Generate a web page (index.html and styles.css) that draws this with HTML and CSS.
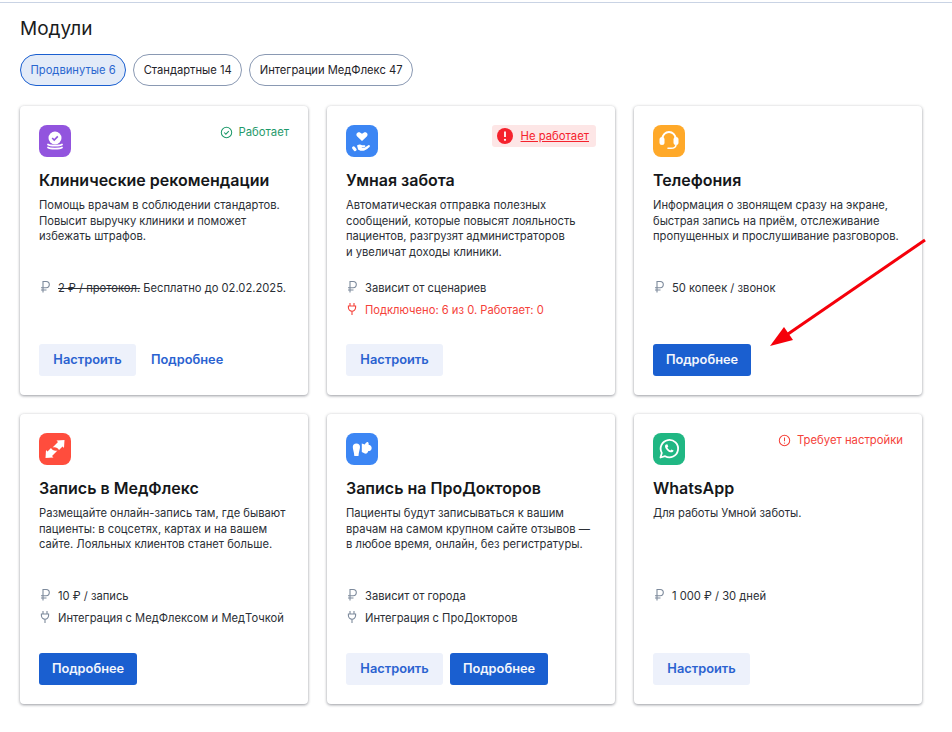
FILE: index.html
```html
<!DOCTYPE html>
<html lang="ru">
<head>
<meta charset="utf-8">
<title>Модули</title>
<link rel="stylesheet" href="styles.css">
</head>
<body>
<svg width="0" height="0" class="defs">
  <symbol id="rub" viewBox="0 0 12 14"><path d="M4 12.5V1.5h3.200a3 3 0 0 1 0 6.200H2M2 10h5.500" fill="none" stroke="currentColor" stroke-width="1.100"/></symbol>
  <symbol id="plug" viewBox="0 0 12 14"><path d="M4 1v3M8 1v3M2.400 4h7.200v1.600a3.600 3.600 0 0 1-7.200 0zM6 9.200V13" fill="none" stroke="currentColor" stroke-width="1.100"/></symbol>
</svg>
<main class="page">
  <h1 class="title">Модули</h1>
  <div class="tabs">
    <span class="tab tab-active">Продвинутые 6</span>
    <span class="tab">Стандартные 14</span>
    <span class="tab">Интеграции МедФлекс 47</span>
  </div>
  <section class="grid">
    <article class="card">
      <div class="top">
        <span class="icon purple"><svg viewBox="0 0 32 32" width="32" height="32"><circle cx="16" cy="13" r="6.500" fill="#fff"/><path d="M13.200 13l2 2 3.600-3.600" fill="none" stroke="#9254de" stroke-width="1.600"/><path d="M9 19.500c2 1.400 12 1.400 14 0M9 22.500c2 1.400 12 1.400 14 0" fill="none" stroke="#fff" stroke-width="1.800" stroke-linecap="round"/></svg></span>
        <span class="status ok"><svg viewBox="0 0 14 14" width="13" height="13"><circle cx="7" cy="7" r="5.600" fill="none" stroke="currentColor" stroke-width="1.100"/><path d="M4.500 7l1.800 1.800 3.200-3.300" fill="none" stroke="currentColor" stroke-width="1.100"/></svg>Работает</span>
      </div>
      <h2 class="name">Клинические рекомендации</h2>
      <p class="desc">Помощь врачам в соблюдении стандартов. Повысит выручку клиники и поможет избежать штрафов.</p>
      <ul class="meta">
        <li><svg class="mi"><use href="#rub"/></svg><span><s>2 ₽ / протокол.</s> Бесплатно до 02.02.2025.</span></li>
      </ul>
      <div class="actions"><a class="btn soft">Настроить</a><a class="btn link">Подробнее</a></div>
    </article>
    <article class="card">
      <div class="top">
        <span class="icon blue"><svg viewBox="0 0 32 32" width="32" height="32"><path d="M16 16l-4.800-4.400c-2.200-2.400.6-5.400 3.200-3.800l1.600 1 1.600-1c2.600-1.600 5.400 1.400 3.200 3.800z" fill="#fff"/><path d="M11 20.500c2-1.300 3.500-1.200 5-.3h2.500c1.200 0 1.200 1.800 0 1.800h-2.700v.4h3l3.500-2.200c1.300-.6 2.300.8 1.200 1.800-3.500 3.200-5 3.800-8 3.800-1.500 0-2.500-.8-3.400-1.300z" fill="#fff"/><rect x="6.800" y="21" width="3" height="5.500" rx="1.500" transform="rotate(-40 8.300 23.700)" fill="#fff"/></svg></span>
        <a class="status bad"><svg viewBox="0 0 16 16" width="16" height="16"><circle cx="8" cy="8" r="8" fill="#f5222d"/><path d="M8 3.500v5.500" stroke="#fff" stroke-width="1.800"/><circle cx="8" cy="11.800" r="1.100" fill="#fff"/></svg><u>Не работает</u></a>
      </div>
      <h2 class="name">Умная забота</h2>
      <p class="desc">Автоматическая отправка полезных сообщений, которые повысят лояльность пациентов, разгрузят администраторов и&nbsp;увеличат доходы клиники.</p>
      <ul class="meta">
        <li><svg class="mi"><use href="#rub"/></svg><span>Зависит от сценариев</span></li>
        <li class="alert"><svg class="mi"><use href="#plug"/></svg><span>Подключено: 6 из 0. Работает: 0</span></li>
      </ul>
      <div class="actions"><a class="btn soft">Настроить</a></div>
    </article>
    <article class="card">
      <div class="top">
        <span class="icon orange"><svg viewBox="0 0 32 32" width="32" height="32"><path d="M9.500 14v-.5a6.500 6.500 0 0 1 13 0v.5" fill="none" stroke="#fff" stroke-width="2"/><rect x="6.500" y="12" width="5" height="8" rx="2.500" fill="#fff"/><rect x="20.500" y="12" width="5" height="8" rx="2.500" fill="#fff"/><path d="M23 20c-.3 2.300-2 3.300-5 3.300h-3" fill="none" stroke="#fff" stroke-width="1.600" stroke-linecap="round"/></svg></span>
      </div>
      <h2 class="name">Телефония</h2>
      <p class="desc">Информация о звонящем сразу на экране, быстрая запись на приём, отслеживание пропущенных и прослушивание разговоров.</p>
      <ul class="meta">
        <li><svg class="mi"><use href="#rub"/></svg><span>50 копеек / звонок</span></li>
      </ul>
      <div class="actions"><a class="btn solid">Подробнее</a></div>
    </article>
    <article class="card">
      <div class="top">
        <span class="icon red"><svg viewBox="0 0 32 32" width="32" height="32"><path d="M13.500 14.500l5.500-5.500-1.500-1.500 8-.5-.5 8-1.500-1.500-3.500 3.500c-1.500-2.500-3.500-3.200-6.500-2.500z" fill="#fff"/><path d="M18.500 17.500l-5.500 5.500 1.500 1.500-8 .5.500-8 1.500 1.500 3.500-3.500c1.500 2.500 3.500 3.200 6.500 2.500z" fill="#fff"/></svg></span>
      </div>
      <h2 class="name">Запись в МедФлекс</h2>
      <p class="desc">Размещайте онлайн-запись там, где бывают пациенты: в соцсетях, картах и на вашем сайте. Лояльных клиентов станет больше.</p>
      <ul class="meta">
        <li><svg class="mi"><use href="#rub"/></svg><span>10 ₽ / запись</span></li>
        <li><svg class="mi"><use href="#plug"/></svg><span>Интеграция с МедФлексом и МедТочкой</span></li>
      </ul>
      <div class="actions"><a class="btn solid">Подробнее</a></div>
    </article>
    <article class="card">
      <div class="top">
        <span class="icon blue"><svg viewBox="0 0 32 32" width="32" height="32"><path d="M6.800 14a3.600 3.600 0 0 1 7.200 0c0 2.500-1.200 4.500-1.500 9h-4.200c-.3-4.500-1.500-6.500-1.500-9z" fill="#fff"/><path d="M15.800 10.500l3 1c1-2 2.500-3 3.500-2 .5.800.5 1.500.3 2.200 2.400.5 3.400 2.300 3 4-.3 1.500-1.500 2.300-3.300 2.300-.5 2-2 3-3.500 2.500l-3-1.500z" fill="#fff"/></svg></span>
      </div>
      <h2 class="name">Запись на ПроДокторов</h2>
      <p class="desc">Пациенты будут записываться к вашим врачам на самом крупном сайте отзывов — в любое время, онлайн, без регистратуры.</p>
      <ul class="meta">
        <li><svg class="mi"><use href="#rub"/></svg><span>Зависит от города</span></li>
        <li><svg class="mi"><use href="#plug"/></svg><span>Интеграция с ПроДокторов</span></li>
      </ul>
      <div class="actions"><a class="btn soft">Настроить</a><a class="btn solid">Подробнее</a></div>
    </article>
    <article class="card">
      <div class="top">
        <span class="icon green"><svg viewBox="0 0 32 32" width="32" height="32"><path d="M7.500 24.500l1.300-4.600a8.700 8.700 0 1 1 3.300 3.300z" fill="none" stroke="#fff" stroke-width="1.800" stroke-linejoin="round"/><path d="M13 11.500c-1.200.6-1.300 2.200-.3 3.900 1.100 1.900 3 3.500 4.900 3.900 1.600.3 2.800-.5 3-1.700l-2.200-1.200-1 1c-1.300-.4-2.500-1.700-3-3l.9-1-1-2.200z" fill="#fff"/></svg></span>
        <span class="status warn"><svg viewBox="0 0 14 14" width="13" height="13"><circle cx="7" cy="7" r="5.600" fill="none" stroke="currentColor" stroke-width="1.100"/><path d="M7 3.800v4" stroke="currentColor" stroke-width="1.100"/><circle cx="7" cy="9.800" r=".7" fill="currentColor"/></svg>Требует настройки</span>
      </div>
      <h2 class="name">WhatsApp</h2>
      <p class="desc">Для работы Умной заботы.</p>
      <ul class="meta">
        <li><svg class="mi"><use href="#rub"/></svg><span>1 000 ₽ / 30 дней</span></li>
      </ul>
      <div class="actions"><a class="btn soft">Настроить</a></div>
    </article>
  </section>
</main>
<svg class="arrow" width="170" height="120" viewBox="0 0 170 120"><path d="M165 10L28 104" stroke="#f5000a" stroke-width="3"/><path d="M10 116L24 97l9 13z" fill="#f5000a"/></svg>
</body>
</html>
```
FILE: styles.css
```css
* { box-sizing: border-box; }
html, body { margin: 0; padding: 0; }
body {
  position: relative;
  background: #fff;
  color: #1a1c20;
  font-family: Inter, "Noto Sans", sans-serif;
  overflow: hidden;
  height: 732px;
}
.defs { position: absolute; }
.page {
  border-top: 1px solid #c9d3e4;
  margin-top: 2px;
  padding: 14px 30px 0 20px;
}
.title {
  margin: 0 0 13px;
  font-size: 19px;
  line-height: 24px;
  font-weight: 400;
}
.tabs { display: flex; gap: 7px; margin-bottom: 20px; }
.tab {
  display: flex;
  align-items: center;
  height: 32px;
  padding: 0 9.500px;
  border: 1px solid #8a99b3;
  border-radius: 16px;
  font-size: 11.200px;
  color: #1f2329;
}
.tab-active {
  background: #e3ebf8;
  border-color: #1a5fd0;
  color: #2a66cf;
}
.grid {
  display: grid;
  grid-template-columns: repeat(3, 288px);
  grid-template-rows: 289px 290px;
  gap: 19px;
}
.card {
  display: flex;
  flex-direction: column;
  padding: 19px;
  background: #fff;
  border-radius: 4px;
  box-shadow: 0 1px 3px rgba(20, 25, 40, .4), 0 0 4px rgba(20, 25, 40, .06);
}
.top {
  display: flex;
  justify-content: space-between;
  align-items: flex-start;
  height: 32px;
}
.icon {
  display: block;
  width: 32px;
  height: 32px;
  border-radius: 8px;
  overflow: hidden;
}
.icon svg { display: block; }
.purple { background: #9254de; }
.blue { background: #3c86f4; }
.orange { background: #ffa929; }
.red { background: #ff4d3d; }
.green { background: #20b783; }
.status {
  display: flex;
  align-items: center;
  gap: 6px;
  font-size: 11.300px;
  line-height: 14px;
}
.warn { color: #f5423a; }
.ok { color: #1f9a6b; }
.bad {
  gap: 8px;
  margin: 0;
  padding: 3px 7px 3px 5px;
  background: #fde6e6;
  border-radius: 3px;
  color: #f5222d;
}
.name {
  margin: 12px 0 7px;
  font-size: 16px;
  line-height: 22px;
  font-weight: 600;
  color: #15171a;
}
.desc {
  margin: 0;
  height: 62px;
  font-size: 11.200px;
  line-height: 15.600px;
  color: #2b2f36;
}
.meta {
  list-style: none;
  margin: 21px 0 0;
  padding: 0;
  display: flex;
  flex-direction: column;
  gap: 8px;
  font-size: 11.200px;
  line-height: 14px;
  color: #2b2f36;
}
.meta li { display: flex; align-items: flex-start; gap: 7px; }
.mi { width: 12px; height: 14px; margin-top: -1px; color: #7d8a9c; flex: none; }
.alert { color: #f5423a; }
.alert .mi { color: #f5423a; }
.actions {
  display: flex;
  gap: 7px;
  margin-top: auto;
}
.btn {
  display: flex;
  align-items: center;
  justify-content: center;
  height: 32px;
  padding: 0 14px 1px;
  border-radius: 3px;
  font-size: 12.800px;
  font-weight: 600;
}
.soft { width: 97px; background: #edf1fb; color: #2a62d0; }
.solid { width: 98px; background: #1a5fd0; color: #f3f6fc; }
.link { color: #2a62d0; padding: 0 8px 1px; }
.arrow { position: absolute; left: 760px; top: 230px; }
```
